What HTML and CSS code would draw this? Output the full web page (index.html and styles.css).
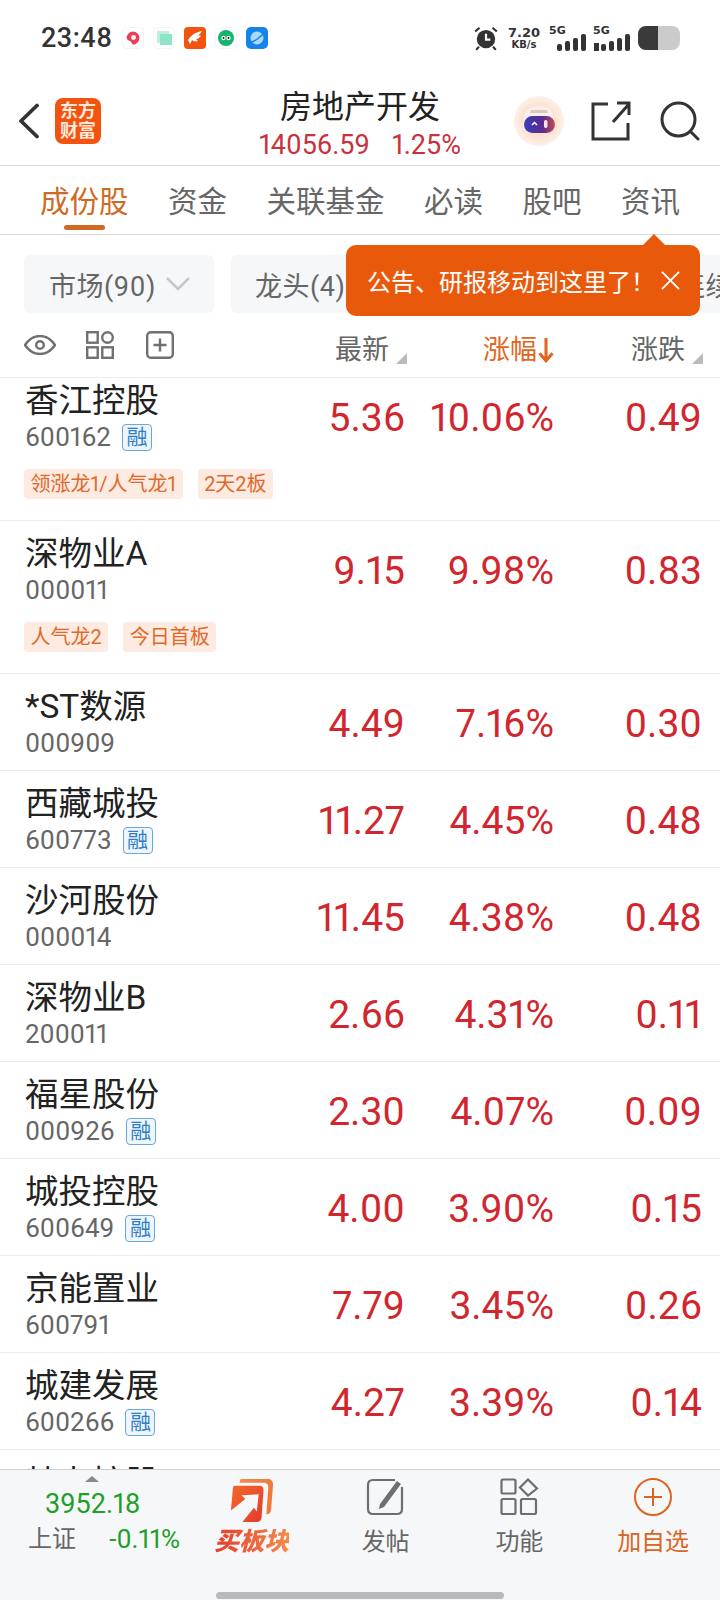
FILE: index.html
```html
<!DOCTYPE html>
<html lang="zh-CN">
<head>
    <meta charset="UTF-8">
    <meta name="viewport" content="width=device-width, initial-scale=1.0">
    <title>房地产开发</title>
    <link rel="stylesheet" href="styles.css">
</head>
<body>
    <div class="status-bar">
        <span class="clock">23:48</span>
        <div class="app-icons">
            <svg class="app-icon" viewBox="0 0 22 22"><rect x=".5" y=".5" width="21" height="21" rx="4" fill="#fff" stroke="#f3f3f3"/><path d="M11 4.500a6.500 6.500 0 0 1 6.400 6.500c0 4-4 6.700-6.200 6.700-1.300 0-1.100-2.200-2.500-3.200C7 13.200 4.600 13 4.600 11A6.500 6.500 0 0 1 11 4.500z" fill="#ec3f55"/><circle cx="11.500" cy="10.500" r="2.400" fill="#fff"/></svg>
            <svg class="app-icon" viewBox="0 0 22 22"><rect x=".5" y=".5" width="21" height="21" rx="4" fill="#fff" stroke="#f5f5f5"/><rect x="4" y="4" width="12" height="12" fill="#bdf0dc"/><rect x="7" y="7" width="12" height="11" fill="#8fe3c6"/></svg>
            <svg class="app-icon" viewBox="0 0 22 22"><rect width="22" height="22" rx="4" fill="#f2530f"/><path d="M4 13c3-5 8-8 14-9-2 3-3 4-5 5 0 0 3-1 4 0-2 2-3 3-5 3l2 2c-3 1-5 0-6-1l-2 4z" fill="#fff"/></svg>
            <svg class="app-icon" viewBox="0 0 22 22"><rect x=".5" y=".5" width="21" height="21" rx="4" fill="#fff" stroke="#f5f5f5"/><circle cx="11" cy="11" r="8" fill="#14b56c"/><circle cx="8.500" cy="11" r="2.200" fill="#fff"/><circle cx="13.500" cy="11" r="2.200" fill="#fff"/><circle cx="8.500" cy="11" r="1" fill="#222"/><circle cx="13.500" cy="11" r="1" fill="#222"/></svg>
            <svg class="app-icon" viewBox="0 0 22 22"><rect width="22" height="22" rx="5" fill="#1583ec"/><circle cx="11" cy="11" r="6.500" fill="#a9d8fb"/><path d="M3 16c5-1 12-6 16-11" stroke="#1583ec" stroke-width="1.500" fill="none"/></svg>
        </div>
        <div class="status-right">
            <svg class="alarm" viewBox="0 0 24 24"><circle cx="12" cy="13" r="8.500" fill="#333"/><path d="M12 8v5.500h4" stroke="#fff" stroke-width="2" fill="none"/><path d="M2 6l4-3.500M22 6l-4-3.500M5.500 20L3 23M18.500 20L21 23" stroke="#333" stroke-width="2"/></svg>
            <div class="net-speed"><span>7.20</span><span class="net-unit">KB/s</span></div>
            <div class="signal">
                <span class="signal-label">5G</span>
                <div class="bars"><i class="b1"></i><i class="b2"></i><i class="b3"></i><i class="b4"></i></div>
            </div>
            <div class="signal signal-2">
                <span class="signal-label">5G</span>
                <div class="bars"><b class="updown"></b><i class="b1"></i><i class="b2"></i><i class="b3"></i><i class="b4"></i></div>
            </div>
            <div class="battery"><div class="battery-fill"></div></div>
        </div>
    </div>

    <div class="top-nav">
        <svg class="back" viewBox="0 0 24 36"><path d="M20 2.500L4 18l16 15.500" fill="none" stroke="#333" stroke-width="3.800" stroke-linecap="round" stroke-linejoin="round"/></svg>
        <div class="logo"><span>东方</span><span>财富</span></div>
        <div class="nav-title">
            <div class="nav-name">房地产开发</div>
            <div class="nav-quote"><span>14056.59</span><span>1.25%</span></div>
        </div>
        <svg class="robot" viewBox="0 0 50 50">
            <defs>
                <radialGradient id="peach"><stop offset="0.5" stop-color="#fbdcc9"/><stop offset="1" stop-color="#fdf1ea"/></radialGradient>
                <linearGradient id="visor"><stop offset="0" stop-color="#3a3fb8"/><stop offset="0.6" stop-color="#5a2a90"/><stop offset="1" stop-color="#c84a50"/></linearGradient>
            </defs>
            <circle cx="25" cy="25" r="25" fill="url(#peach)"/>
            <path d="M10 22c1-9 8-12 15-12s14 3 15 12l1 12H9z" fill="#f4f1ee"/>
            <path d="M17 14h16l1 3H16z" fill="#dcc8b4"/>
            <rect x="10" y="20" width="31" height="17" rx="8.500" fill="url(#visor)"/>
            <path d="M18 29l2.500-2.500L23 29" fill="none" stroke="#fff" stroke-width="1.500"/>
            <rect x="30" y="24" width="3.500" height="8" rx="1.700" fill="#fbe4e4"/>
        </svg>
        <svg class="nav-btn nav-share" viewBox="0 0 40 40"><path d="M17 3H2v35h35V22M22 21L38 3M26 2h12v12" fill="none" stroke="#333" stroke-width="3"/></svg>
        <svg class="nav-btn nav-search" viewBox="0 0 40 40"><circle cx="18.500" cy="18.500" r="16.500" fill="none" stroke="#333" stroke-width="3"/><path d="M31 31l7 7" stroke="#333" stroke-width="3" stroke-linecap="round"/></svg>
    </div>

    <div class="tabs">
        <a class="tab tab-active">成份股</a>
        <a class="tab">资金</a>
        <a class="tab">关联基金</a>
        <a class="tab">必读</a>
        <a class="tab">股吧</a>
        <a class="tab">资讯</a>
    </div>

    <div class="filters">
        <div class="chip chip-market">市场(90)
            <svg class="chip-arrow" viewBox="0 0 26 16"><path d="M2 2l11 11L24 2" fill="none" stroke="#c4c6ca" stroke-width="2.500"/></svg>
        </div>
        <div class="chip chip-leader">龙头(4)</div>
        <div class="chip chip-run">连续涨停</div>
    </div>

    <div class="tip">
        <span>公告、研报移动到这里了！</span>
        <svg class="tip-close" viewBox="0 0 20 20"><path d="M1 1l18 18M19 1L1 19" stroke="#fff" stroke-width="2"/></svg>
    </div>

    <div class="col-head">
        <div class="col-tools">
            <svg class="tool-eye" viewBox="0 0 32 20"><path d="M1 10C5 4 10 1 16 1s11 3 15 9c-4 6-9 9-15 9S5 16 1 10z" fill="none" stroke="#707070" stroke-width="2.400"/><circle cx="16" cy="10" r="3.800" fill="none" stroke="#707070" stroke-width="2.400"/></svg>
            <svg class="tool-grid" viewBox="0 0 28 28" fill="none" stroke="#707070" stroke-width="2.400"><rect x="1.200" y="1.200" width="10.500" height="10.500"/><circle cx="21.500" cy="6.500" r="5.300"/><rect x="1.200" y="16.300" width="10.500" height="10.500"/><rect x="16.300" y="16.300" width="10.500" height="10.500"/></svg>
            <svg class="tool-add" viewBox="0 0 28 28" fill="none" stroke="#707070" stroke-width="2.400"><rect x="1.200" y="1.200" width="25.600" height="25.600" rx="3.500"/><path d="M14 7.500v13M7.500 14h13"/></svg>
        </div>
        <div class="col-label col-price">最新<i class="sort-mark"></i></div>
        <div class="col-label col-pct">涨幅<svg class="sort-down" viewBox="0 0 14 24"><path d="M7 1v21M1 15l6 7 6-7" fill="none" stroke="#e2651c" stroke-width="2.800"/></svg></div>
        <div class="col-label col-chg">涨跌<i class="sort-mark"></i></div>
    </div>

    <div class="stock-list">
        <div class="stock stock-first">
            <div class="stock-main">
                <div class="stock-id"><div class="stock-name">香江控股</div><div class="stock-code">600162<span class="rong">融</span></div></div>
                <div class="num num-price">5.36</div><div class="num num-pct">10.06%</div><div class="num num-chg">0.49</div>
            </div>
            <div class="tags"><span class="tag">领涨龙1/人气龙1</span><span class="tag">2天2板</span></div>
        </div>
        <div class="stock">
            <div class="stock-main">
                <div class="stock-id"><div class="stock-name">深物业A</div><div class="stock-code">000011</div></div>
                <div class="num num-price">9.15</div><div class="num num-pct">9.98%</div><div class="num num-chg">0.83</div>
            </div>
            <div class="tags"><span class="tag">人气龙2</span><span class="tag">今日首板</span></div>
        </div>
        <div class="stock">
            <div class="stock-main">
                <div class="stock-id"><div class="stock-name">*ST数源</div><div class="stock-code">000909</div></div>
                <div class="num num-price">4.49</div><div class="num num-pct">7.16%</div><div class="num num-chg">0.30</div>
            </div>
        </div>
        <div class="stock">
            <div class="stock-main">
                <div class="stock-id"><div class="stock-name">西藏城投</div><div class="stock-code">600773<span class="rong">融</span></div></div>
                <div class="num num-price">11.27</div><div class="num num-pct">4.45%</div><div class="num num-chg">0.48</div>
            </div>
        </div>
        <div class="stock">
            <div class="stock-main">
                <div class="stock-id"><div class="stock-name">沙河股份</div><div class="stock-code">000014</div></div>
                <div class="num num-price">11.45</div><div class="num num-pct">4.38%</div><div class="num num-chg">0.48</div>
            </div>
        </div>
        <div class="stock">
            <div class="stock-main">
                <div class="stock-id"><div class="stock-name">深物业B</div><div class="stock-code">200011</div></div>
                <div class="num num-price">2.66</div><div class="num num-pct">4.31%</div><div class="num num-chg">0.11</div>
            </div>
        </div>
        <div class="stock">
            <div class="stock-main">
                <div class="stock-id"><div class="stock-name">福星股份</div><div class="stock-code">000926<span class="rong">融</span></div></div>
                <div class="num num-price">2.30</div><div class="num num-pct">4.07%</div><div class="num num-chg">0.09</div>
            </div>
        </div>
        <div class="stock">
            <div class="stock-main">
                <div class="stock-id"><div class="stock-name">城投控股</div><div class="stock-code">600649<span class="rong">融</span></div></div>
                <div class="num num-price">4.00</div><div class="num num-pct">3.90%</div><div class="num num-chg">0.15</div>
            </div>
        </div>
        <div class="stock">
            <div class="stock-main">
                <div class="stock-id"><div class="stock-name">京能置业</div><div class="stock-code">600791</div></div>
                <div class="num num-price">7.79</div><div class="num num-pct">3.45%</div><div class="num num-chg">0.26</div>
            </div>
        </div>
        <div class="stock">
            <div class="stock-main">
                <div class="stock-id"><div class="stock-name">城建发展</div><div class="stock-code">600266<span class="rong">融</span></div></div>
                <div class="num num-price">4.27</div><div class="num num-pct">3.39%</div><div class="num num-chg">0.14</div>
            </div>
        </div>
        <div class="stock">
            <div class="stock-main">
                <div class="stock-id"><div class="stock-name">特力控股</div><div class="stock-code"></div></div>
            </div>
        </div>
    </div>

    <div class="bottom-bar">
        <div class="bottom-items">
            <div class="index-box">
                <i class="index-up"></i>
                <div class="index-value">3952.18</div>
                <div class="index-line"><span class="index-name">上证</span><span class="index-pct">-0.11%</span></div>
            </div>
            <div class="action">
                <svg class="action-icon action-icon-buy" viewBox="0 0 48 46">
                    <defs>
                        <linearGradient id="boardBack" x1="0" y1="0" x2="1" y2="0"><stop offset="0" stop-color="#f08a55"/><stop offset="1" stop-color="#f07a36"/></linearGradient>
                        <linearGradient id="boardFront" x1="0" y1="0" x2="1" y2="1"><stop offset="0" stop-color="#f4682c"/><stop offset="1" stop-color="#e33a2c"/></linearGradient>
                    </defs>
                    <path d="M12 1h28c4 0 6 2 6 6l-2 26c0 3-2 5-5 5l2-28c0-4-2-5-5-5H11z" fill="url(#boardBack)"/>
                    <path d="M6 8h26c3 0 4 2 4 5l-2 28c0 3-2 5-5 5H14l12-15 3 4 2-18-18 1 4 4L2 34 4 11c0-2 1-3 2-3z" fill="url(#boardFront)"/>
                </svg>
                <span class="action-label action-buy">买板块</span>
            </div>
            <div class="action">
                <svg class="action-icon" viewBox="0 0 40 38" fill="none" stroke="#6e6e6e" stroke-width="2.200"><path d="M29 2H7C4 2 2 4 2 7v24c0 3 2 5 5 5h24c3 0 5-2 5-5V9"/><path d="M14 26L31 3l4 3-17 23-5 2z" fill="#6e6e6e" stroke="none"/></svg>
                <span class="action-label">发帖</span>
            </div>
            <div class="action">
                <svg class="action-icon" viewBox="0 0 38 38" fill="none" stroke="#6e6e6e" stroke-width="2.200"><rect x="1.500" y="1.500" width="14" height="14" rx="1.500"/><path d="M28 1.500l9 9-9 7-8-8z"/><rect x="1.500" y="21" width="14" height="15" rx="1.500"/><rect x="21" y="21" width="15" height="15" rx="1.500"/></svg>
                <span class="action-label">功能</span>
            </div>
            <div class="action">
                <svg class="action-icon" viewBox="0 0 38 38" fill="none" stroke="#dd6420" stroke-width="2"><circle cx="19" cy="19" r="18"/><path d="M19 10v18M10 19h18"/></svg>
                <span class="action-label action-add">加自选</span>
            </div>
        </div>
        <div class="home-bar"></div>
    </div>
</body>
</html>
```

FILE: styles.css
```css
body {
    margin: 0;
    width: 720px;
    height: 1600px;
    overflow: hidden;
    position: relative;
    display: flex;
    flex-direction: column;
    background-color: white;
    color: #222;
    font-family: Roboto, "Noto Sans CJK SC", sans-serif;
    font-variant-numeric: proportional-nums;
}

/* status bar */
.status-bar {
    flex: none;
    height: 80px;
    display: flex;
    align-items: center;
    padding: 0 40px 4px 41px;
    box-sizing: border-box;
}
.clock {
    width: 81px;
    font-size: 27px;
    font-weight: 500;
    color: #333;
    letter-spacing: 0.5px;
}
.app-icons {
    display: flex;
    gap: 9px;
}
.app-icon {
    width: 22px;
    height: 22px;
}
.status-right {
    margin-left: auto;
    display: flex;
    align-items: center;
}
.alarm {
    width: 26px;
    height: 26px;
    margin-right: 9px;
}
.net-speed {
    display: flex;
    flex-direction: column;
    align-items: center;
    width: 32px;
    font-family: "DejaVu Sans", sans-serif;
    font-size: 13px;
    font-weight: bold;
    line-height: 13px;
    color: #333;
}
.net-unit {
    font-size: 10px;
    line-height: 12px;
}
.signal {
    position: relative;
    width: 37px;
    height: 26px;
    margin-left: 9px;
}
.signal-2 {
    margin-left: 7px;
}
.signal-label {
    position: absolute;
    left: 0;
    top: -1px;
    font-family: "DejaVu Sans", sans-serif;
    font-size: 11px;
    font-weight: bold;
    color: #333;
}
.bars {
    position: absolute;
    right: 0;
    bottom: 0;
    display: flex;
    align-items: flex-end;
    gap: 3px;
}
.bars i {
    display: block;
    width: 5px;
    border-radius: 2px;
    background-color: #333;
}
.bars .b1 { height: 7px; }
.bars .b2 { height: 10px; }
.bars .b3 { height: 13px; }
.bars .b4 { height: 17px; }
.updown {
    display: block;
    width: 5px;
    height: 8px;
    margin-right: -1px;
    background-color: #333;
}
.battery {
    width: 42px;
    height: 24px;
    margin-left: 8px;
    border-radius: 8px;
    overflow: hidden;
    background-color: #cbcbcb;
}
.battery-fill {
    width: 20px;
    height: 100%;
    background-color: #3a3a3a;
}

/* top nav */
.top-nav {
    flex: none;
    position: relative;
    height: 85px;
    border-bottom: 1px solid #d9d9d9;
}
.back {
    position: absolute;
    left: 17px;
    top: 23px;
    width: 24px;
    height: 36px;
}
.logo {
    position: absolute;
    left: 55px;
    top: 18px;
    width: 46px;
    height: 46px;
    border-radius: 8px;
    background-color: #f2530f;
    color: #ffe9da;
    display: flex;
    flex-direction: column;
    align-items: center;
    justify-content: center;
    font-size: 18px;
    font-weight: bold;
    line-height: 20px;
}
.nav-title {
    text-align: center;
    padding-top: 6px;
}
.nav-name {
    font-size: 32px;
    line-height: 42px;
    color: #222;
}
.nav-quote {
    display: flex;
    justify-content: center;
    gap: 22px;
    font-size: 27px;
    line-height: 34px;
    color: #c8323c;
}
.robot {
    position: absolute;
    left: 514px;
    top: 16px;
    width: 50px;
    height: 50px;
}
.nav-btn {
    position: absolute;
    width: 40px;
    height: 40px;
    top: 21px;
}
.nav-share { left: 591px; }
.nav-search { left: 660px; }

/* tabs */
.tabs {
    flex: none;
    display: flex;
    gap: 39.500px;
    height: 68px;
    padding-left: 40px;
    border-bottom: 1px solid #d9d9d9;
    font-size: 29.500px;
    line-height: 72px;
    color: #666;
}
.tab {
    position: relative;
}
.tab-active {
    color: #cf6a24;
}
.tab-active::after {
    content: "";
    position: absolute;
    left: 24px;
    bottom: 4px;
    width: 41px;
    height: 5px;
    border-radius: 3px;
    background-color: #cf6a24;
}

/* filter chips */
.filters {
    flex: none;
    display: flex;
    gap: 17px;
    padding: 20px 0 0 24px;
    height: 58px;
    overflow: hidden;
    white-space: nowrap;
}
.chip {
    flex: none;
    display: flex;
    align-items: center;
    height: 58px;
    border-radius: 6px;
    background-color: #f6f7f9;
    font-size: 27px;
    letter-spacing: 0.5px;
    color: #666;
    box-sizing: border-box;
}
.chip-market {
    width: 190px;
    padding-left: 25px;
}
.chip-arrow {
    width: 26px;
    height: 16px;
    margin-left: 9px;
}
.chip-leader {
    width: 420px;
    padding-left: 24px;
}
.chip-run {
    padding-left: 10px;
}

/* tooltip over the filter row */
.tip {
    position: absolute;
    left: 346px;
    top: 245px;
    width: 354px;
    height: 71px;
    box-sizing: border-box;
    padding-left: 21px;
    display: flex;
    align-items: center;
    border-radius: 10px;
    background-color: #e9590c;
    color: white;
    font-size: 24px;
}
.tip::before {
    content: "";
    position: absolute;
    left: 296px;
    top: -11px;
    border-left: 12px solid transparent;
    border-right: 12px solid transparent;
    border-bottom: 12px solid #e9590c;
}
.tip-close {
    position: absolute;
    left: 315px;
    top: 26px;
    width: 19px;
    height: 19px;
}

/* column header */
.col-head {
    flex: none;
    display: flex;
    align-items: center;
    height: 64px;
    padding: 0 17px 0 24px;
    border-bottom: 1px solid #eeeeee;
    box-sizing: content-box;
}
.col-tools {
    flex: 1;
    display: flex;
    align-items: center;
}
.tool-eye {
    width: 32px;
    height: 20px;
    margin-right: 30px;
}
.tool-grid {
    width: 28px;
    height: 28px;
    margin-right: 32px;
}
.tool-add {
    width: 28px;
    height: 28px;
}
.col-label {
    position: relative;
    display: flex;
    align-items: center;
    justify-content: flex-end;
    margin-top: 10px;
    font-size: 27px;
    line-height: 36px;
    color: #666;
}
.col-price {
    width: 103px;
    padding-right: 18px;
}
.col-pct {
    width: 147px;
    color: #e2651c;
}
.col-chg {
    width: 131px;
    padding-right: 18px;
}
.sort-mark {
    position: absolute;
    right: 0;
    bottom: 4px;
    width: 0;
    height: 0;
    border-left: 11px solid transparent;
    border-bottom: 11px solid #bbbbbb;
}
.sort-down {
    width: 16px;
    height: 26px;
    margin-left: 1px;
}

/* stock list */
.stock-list {
    flex: 1;
    min-height: 0;
    overflow: hidden;
}
.stock {
    padding: 0 18px 0 25px;
    border-bottom: 1px solid #eeeeee;
}
.stock-first {
    margin-top: -10px;
}
.stock-main {
    display: flex;
    align-items: center;
    height: 96px;
    padding-top: 4px;
    box-sizing: border-box;
}
.stock-id {
    flex: 1;
    min-width: 0;
}
.stock-name {
    font-size: 33.500px;
    line-height: 38px;
    color: #222;
}
.stock-code {
    display: flex;
    align-items: center;
    min-height: 34px;
    font-size: 26px;
    line-height: 34px;
    color: #666;
}
.rong {
    width: 30px;
    height: 27px;
    margin-left: 11px;
    border: 1px solid #6aa7dc;
    border-radius: 4px;
    background-color: #eef6fd;
    color: #2f7ec4;
    font-size: 21px;
    line-height: 25px;
    text-align: center;
    box-sizing: border-box;
}
.num {
    font-size: 39px;
    line-height: 44px;
    color: #d2262e;
    text-align: right;
}
.num-price { width: 120px; }
.num-pct { width: 149px; }
.num-chg { width: 148px; }
.tags {
    display: flex;
    gap: 15px;
    margin: 5px 0 0 -1px;
    padding-bottom: 21px;
}
.tag {
    height: 30px;
    padding: 0 6.500px;
    border-radius: 4px;
    background-color: #fdeae0;
    color: #e0692a;
    font-size: 20px;
    line-height: 30px;
}

/* bottom bar */
.bottom-bar {
    flex: none;
    height: 131px;
    box-sizing: border-box;
    border-top: 1px solid #cfcfcf;
    background-color: #f6f7f9;
}
.bottom-items {
    display: flex;
    height: 118px;
}
.index-box {
    flex: none;
    width: 185px;
    position: relative;
    box-sizing: border-box;
    padding-top: 17px;
}
.index-up {
    position: absolute;
    left: 85px;
    top: 6px;
    border-left: 7px solid transparent;
    border-right: 7px solid transparent;
    border-bottom: 6px solid #888888;
}
.index-value {
    margin-left: 45px;
    font-size: 27px;
    line-height: 34px;
    color: #1f9e2c;
}
.index-line {
    display: flex;
    align-items: center;
    justify-content: space-between;
    margin: 1px 5px 0 28px;
    font-size: 24px;
    line-height: 34px;
}
.index-name {
    color: #666;
}
.index-pct {
    font-size: 26px;
    color: #1f9e2c;
}
.action {
    flex: 1;
    display: flex;
    flex-direction: column;
    align-items: center;
    padding-top: 8px;
}
.action-icon {
    flex: none;
    width: 40px;
    height: 38px;
}
.action-icon-buy {
    width: 46px;
    height: 44px;
    margin-bottom: -6px;
}
.action-label {
    margin-top: 9px;
    font-size: 24px;
    line-height: 34px;
    color: #666;
}
.action-add {
    color: #dd6420;
}
.action-buy {
    font-size: 25px;
    font-weight: 900;
    font-style: italic;
    background: linear-gradient(90deg, #e63c2a, #f58a4a);
    -webkit-background-clip: text;
    background-clip: text;
    color: transparent;
}
.home-bar {
    width: 288px;
    height: 7px;
    margin: 4px auto 0;
    border-radius: 4px;
    background-color: #b9b9bb;
}
```
